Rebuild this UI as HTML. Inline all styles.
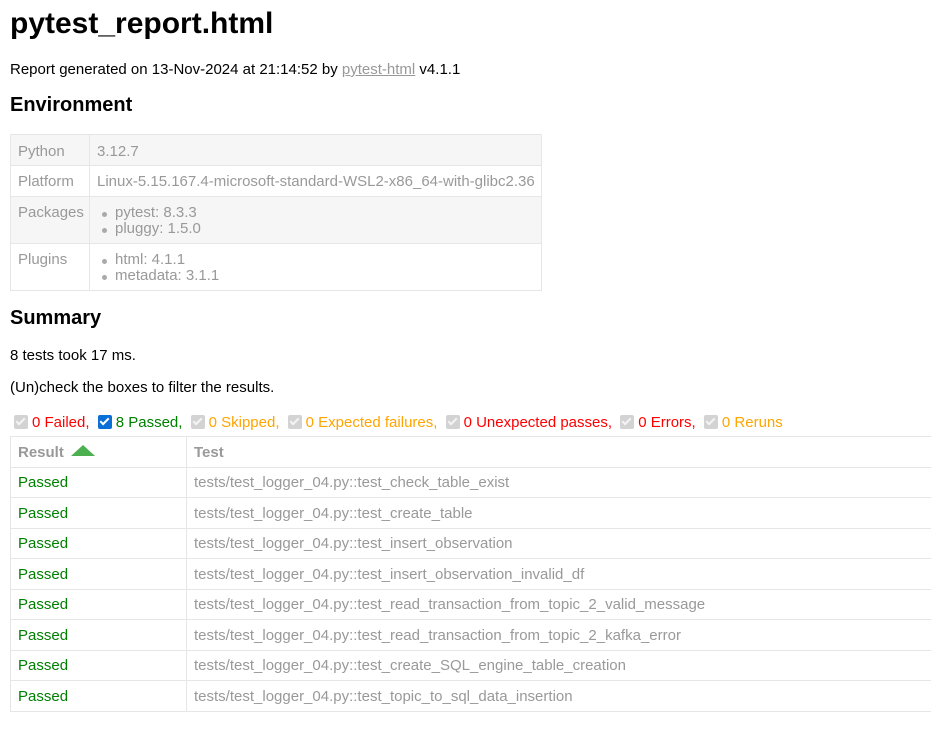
<!DOCTYPE html>
<html><head><meta charset="utf-8"><style>
*{margin:0;padding:0;box-sizing:border-box}
body{width:931px;height:740px;overflow:hidden;background:#fff;font-family:"Liberation Sans",Arial,sans-serif;font-size:15px;color:#000;position:relative}
.a{position:absolute;white-space:nowrap}
h1{font-size:30px;font-weight:bold}
h2{font-size:20px;font-weight:bold}
table{border-collapse:collapse;position:absolute}
#env{left:10px;top:134px;width:532px;color:#999;table-layout:fixed;white-space:nowrap}
#env td{border:1px solid #e6e6e6;padding:0 7px;vertical-align:top;overflow:hidden}
#env tr:nth-child(odd){background:#f6f6f6}
#env ul{list-style:none;margin:0}
#env li{position:relative;padding-left:18px;line-height:16px}
#env li:before{content:"";position:absolute;left:5px;top:7px;width:5px;height:5px;border-radius:50%;background:#aaa}
#res{left:10px;top:436px;width:960px;color:#999}
#res td,#res th{border:1px solid #e6e6e6;padding:1px 7px 0;height:30.5px;text-align:left;font-weight:normal}
#res th{font-weight:bold;color:#999}
.p{color:green}
.cb{display:inline-block;width:14px;height:14px;border-radius:2px;background:#d3d3d3;vertical-align:-2px;margin:0 4px 0 4px;position:relative}
.cb:after{content:"";position:absolute;left:4px;top:1px;width:3px;height:7px;border:solid #f4f4f4;border-width:0 2px 2px 0;transform:rotate(45deg)}
.cb.on{background:#0b6fd8}
.cb.on:after{border-color:#fff}
</style></head><body>
<h1 class="a" style="left:10px;top:7px">pytest_report.html</h1>
<div class="a" style="left:10px;top:61px">Report generated on 13-Nov-2024 at 21:14:52 by <span style="color:#999;text-decoration:underline">pytest-html</span> v4.1.1</div>
<h2 class="a" style="left:10px;top:94px">Environment</h2>
<table id="env">
<colgroup><col style="width:79px"><col></colgroup>
<tr style="height:31px"><td style="padding-top:8px">Python</td><td style="padding-top:8px">3.12.7</td></tr>
<tr style="height:31px"><td style="padding-top:7px">Platform</td><td style="padding-top:7px">Linux-5.15.167.4-microsoft-standard-WSL2-x86_64-with-glibc2.36</td></tr>
<tr style="height:47px"><td style="padding-top:7px">Packages</td><td style="padding-top:8px"><ul><li>pytest: 8.3.3</li><li>pluggy: 1.5.0</li></ul></td></tr>
<tr style="height:47px"><td style="padding-top:7px">Plugins</td><td style="padding-top:8px"><ul><li>html: 4.1.1</li><li>metadata: 3.1.1</li></ul></td></tr>
</table>
<h2 class="a" style="left:10px;top:307px">Summary</h2>
<div class="a" style="left:10px;top:347px">8 tests took 17 ms.</div>
<div class="a" style="left:10px;top:414px"><span class="cb"></span><span style="color:red">0 Failed,</span> <span class="cb on"></span><span style="color:green">8 Passed,</span> <span class="cb"></span><span style="color:orange">0 Skipped,</span> <span class="cb"></span><span style="color:orange">0 Expected failures,</span> <span class="cb"></span><span style="color:red">0 Unexpected passes,</span> <span class="cb"></span><span style="color:red">0 Errors,</span> <span class="cb"></span><span style="color:orange">0 Reruns</span></div>
<div class="a" style="left:10px;top:379px">(Un)check the boxes to filter the results.</div>
<table id="res">
<tr><th style="width:176px">Result <span style="display:inline-block;width:0;height:0;border-left:12px solid transparent;border-right:12px solid transparent;border-bottom:11px solid #4caf50;margin-left:3px;vertical-align:1px"></span></th><th>Test</th></tr>
<tr><td class="p">Passed</td><td>tests/test_logger_04.py::test_check_table_exist</td></tr>
<tr><td class="p">Passed</td><td>tests/test_logger_04.py::test_create_table</td></tr>
<tr><td class="p">Passed</td><td>tests/test_logger_04.py::test_insert_observation</td></tr>
<tr><td class="p">Passed</td><td>tests/test_logger_04.py::test_insert_observation_invalid_df</td></tr>
<tr><td class="p">Passed</td><td>tests/test_logger_04.py::test_read_transaction_from_topic_2_valid_message</td></tr>
<tr><td class="p">Passed</td><td>tests/test_logger_04.py::test_read_transaction_from_topic_2_kafka_error</td></tr>
<tr><td class="p">Passed</td><td>tests/test_logger_04.py::test_create_SQL_engine_table_creation</td></tr>
<tr><td class="p">Passed</td><td>tests/test_logger_04.py::test_topic_to_sql_data_insertion</td></tr>
</table>
</body></html>
